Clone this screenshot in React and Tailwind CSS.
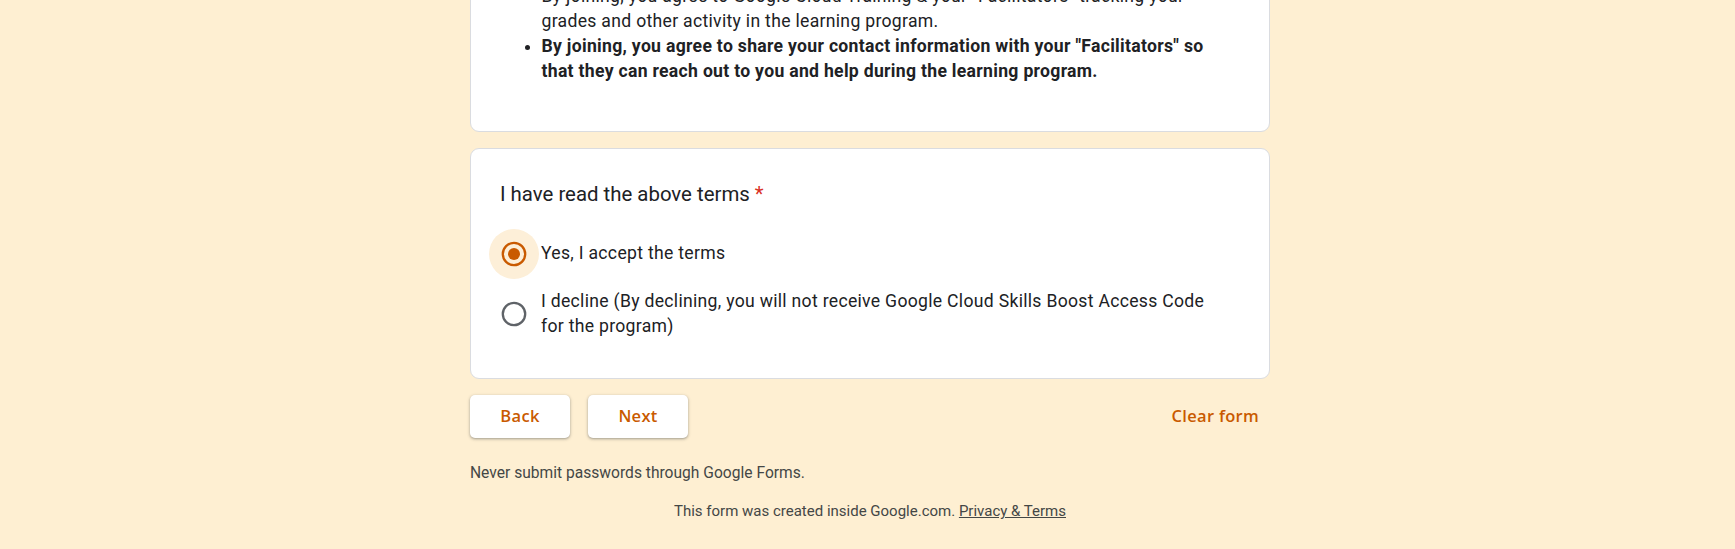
import React from "react";

const ORANGE = "#c95a00";

function Radio({ checked }) {
  return (
    <div className={"-ml-[11px] flex h-[50px] w-[50px] shrink-0 items-center justify-center rounded-full " + (checked ? "bg-[#fdefd8]" : "")}>
      <svg width="26" height="26" viewBox="0 0 26 26">
        <circle cx="13" cy="13" r="11.2" fill="none" stroke={checked ? ORANGE : "#5f6368"} strokeWidth="2.3" />
        {checked && <circle cx="13" cy="13" r="6" fill={ORANGE} />}
      </svg>
    </div>
  );
}

const btn =
  "flex h-[43px] w-[100px] items-center justify-center rounded-[5px] bg-white text-[16.5px] font-semibold tracking-[0.3px] text-[#c95a00] shadow-[0_1px_2px_0_rgba(60,64,67,0.3),0_1px_3px_1px_rgba(60,64,67,0.15)]";

export default function App() {
  return (
    <div
      className="min-h-screen overflow-hidden bg-[#feefd2] pl-[5px] flex justify-center"
      style={{ fontFamily: "Roboto, 'Noto Sans', sans-serif" }}
    >
      <div className="flex w-[800px] flex-col">
        {/* Card 1 */}
        <div className="-mt-[40px] rounded-[9px] border border-[#dadce0] bg-white pl-[29px] pr-[28px] pt-[22.5px] pb-[47px] text-[#202124]">
          <ul className="list-disc pl-[41.5px] text-[17.6px] leading-[25px] tracking-[0.3px]">
            <li className="max-w-[680px]">
              By joining, you agree to Google Cloud Training &amp; your "Facilitators" tracking your grades and other activity in the learning program.
            </li>
            <li className="max-w-[680px] font-bold">
              By joining, you agree to share your contact information with your "Facilitators" so that they can reach out to you and help during the learning program.
            </li>
          </ul>
        </div>

        {/* Card 2 */}
        <div className="mt-[16.5px] rounded-[9px] border border-[#dadce0] bg-white pl-[29px] pr-[28px] pt-[31.5px] pb-[39px] text-[#202124]">
          <div className="text-[20.4px] leading-[26px]">
            I have read the above terms<span className="ml-[5px] text-[#d93025]">*</span>
          </div>
          <div className="mt-[22px] flex flex-col gap-[10px]">
            <div className="flex items-center">
              <Radio checked />
              <div className="ml-[2px] max-w-[680px] text-[17.6px] leading-[25px] tracking-[0.3px]">Yes, I accept the terms</div>
            </div>
            <div className="flex items-center">
              <Radio />
              <div className="ml-[2px] max-w-[680px] text-[17.6px] leading-[25px] tracking-[0.3px]">
                I decline (By declining, you will not receive Google Cloud Skills Boost Access Code for the program)
              </div>
            </div>
          </div>
        </div>

        {/* Buttons */}
        <div
          className="mt-[16px] flex items-center justify-between"
          style={{ fontFamily: "'Open Sans', Roboto, sans-serif" }}
        >
          <div className="flex gap-[18px]">
            <button className={btn}>Back</button>
            <button className={btn}>Next</button>
          </div>
          <button className="flex h-[43px] items-center px-[11px] text-[16.5px] font-semibold tracking-[0.3px] text-[#c95a00]">
            Clear form
          </button>
        </div>

        <div className="mt-[25px] text-[15.6px] leading-[20px] text-[#444746]">
          Never submit passwords through Google Forms.
        </div>

        <div className="mt-[18.5px] text-center text-[15px] leading-[20px] text-[#444746]">
          This form was created inside Google.com. <span className="underline">Privacy &amp; Terms</span>
        </div>
      </div>
    </div>
  );
}
